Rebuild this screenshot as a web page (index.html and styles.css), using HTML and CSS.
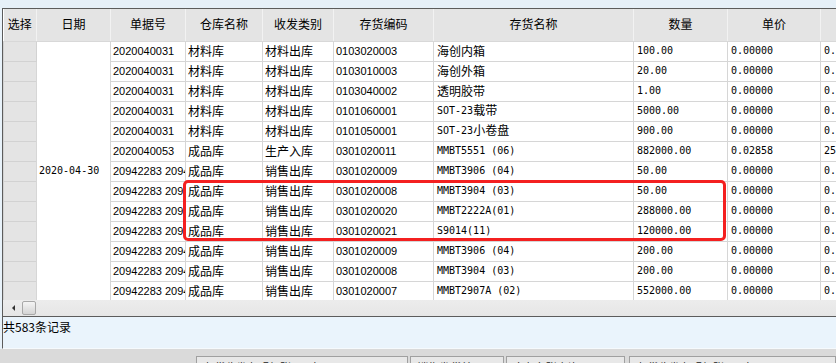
FILE: index.html
```html
<!DOCTYPE html>
<html lang="zh-CN">
  <head>
    <meta charset="UTF-8" />
    <title>出入库流水</title>
    <link rel="stylesheet" href="styles.css">
  </head>
  <body>
    <div class="topbar"></div>

    <!-- Data grid -->
    <div class="frame">
      <div class="grid">
        <table>
          <colgroup>
            <col class="c-sel"><col class="c-date"><col class="c-no"><col class="c-wh">
            <col class="c-type"><col class="c-code"><col class="c-name"><col class="c-qty">
            <col class="c-price"><col class="c-amt">
          </colgroup>
          <thead>
            <tr>
              <th>选择</th><th>日期</th><th>单据号</th><th>仓库名称</th><th>收发类别</th>
              <th>存货编码</th><th>存货名称</th><th>数量</th><th>单价</th><th>金额</th>
            </tr>
          </thead>
          <tbody>
            <tr>
              <td class="sel"></td>
              <td class="date mono" rowspan="13">2020-04-30</td>
              <td class="num">2020040031</td><td>材料库</td><td>材料出库</td><td class="num">0103020003</td>
              <td class="name">海创内箱</td><td class="mono">100.00</td><td class="mono">0.00000</td><td class="mono">0.00</td>
            </tr>
            <tr>
              <td class="sel"></td>
              <td class="num">2020040031</td><td>材料库</td><td>材料出库</td><td class="num">0103010003</td>
              <td class="name">海创外箱</td><td class="mono">20.00</td><td class="mono">0.00000</td><td class="mono">0.00</td>
            </tr>
            <tr>
              <td class="sel"></td>
              <td class="num">2020040031</td><td>材料库</td><td>材料出库</td><td class="num">0103040002</td>
              <td class="name">透明胶带</td><td class="mono">1.00</td><td class="mono">0.00000</td><td class="mono">0.00</td>
            </tr>
            <tr>
              <td class="sel"></td>
              <td class="num">2020040031</td><td>材料库</td><td>材料出库</td><td class="num">0101060001</td>
              <td class="name mono">SOT-23<span class="cn">载带</span></td><td class="mono">5000.00</td><td class="mono">0.00000</td><td class="mono">0.00</td>
            </tr>
            <tr>
              <td class="sel"></td>
              <td class="num">2020040031</td><td>材料库</td><td>材料出库</td><td class="num">0101050001</td>
              <td class="name mono">SOT-23<span class="cn">小卷盘</span></td><td class="mono">900.00</td><td class="mono">0.00000</td><td class="mono">0.00</td>
            </tr>
            <tr>
              <td class="sel"></td>
              <td class="num">2020040053</td><td>成品库</td><td>生产入库</td><td class="num">0301020011</td>
              <td class="name mono">MMBT5551 (06)</td><td class="mono">882000.00</td><td class="mono">0.02858</td><td class="mono">25207.56</td>
            </tr>
            <tr>
              <td class="sel"></td>
              <td class="num">20942283 20942284</td><td>成品库</td><td>销售出库</td><td class="num">0301020009</td>
              <td class="name mono">MMBT3906 (04)</td><td class="mono">50.00</td><td class="mono">0.00000</td><td class="mono">0.00</td>
            </tr>
            <tr>
              <td class="sel"></td>
              <td class="num">20942283 20942284</td><td>成品库</td><td>销售出库</td><td class="num">0301020008</td>
              <td class="name mono">MMBT3904 (03)</td><td class="mono">50.00</td><td class="mono">0.00000</td><td class="mono">0.00</td>
            </tr>
            <tr>
              <td class="sel"></td>
              <td class="num">20942283 20942284</td><td>成品库</td><td>销售出库</td><td class="num">0301020020</td>
              <td class="name mono">MMBT2222A(01)</td><td class="mono">288000.00</td><td class="mono">0.00000</td><td class="mono">0.00</td>
            </tr>
            <tr>
              <td class="sel"></td>
              <td class="num">20942283 20942284</td><td>成品库</td><td>销售出库</td><td class="num">0301020021</td>
              <td class="name mono">S9014(11)</td><td class="mono">120000.00</td><td class="mono">0.00000</td><td class="mono">0.00</td>
            </tr>
            <tr>
              <td class="sel"></td>
              <td class="num">20942283 20942284</td><td>成品库</td><td>销售出库</td><td class="num">0301020009</td>
              <td class="name mono">MMBT3906 (04)</td><td class="mono">200.00</td><td class="mono">0.00000</td><td class="mono">0.00</td>
            </tr>
            <tr>
              <td class="sel"></td>
              <td class="num">20942283 20942284</td><td>成品库</td><td>销售出库</td><td class="num">0301020008</td>
              <td class="name mono">MMBT3904 (03)</td><td class="mono">200.00</td><td class="mono">0.00000</td><td class="mono">0.00</td>
            </tr>
            <tr>
              <td class="sel"></td>
              <td class="num">20942283 20942284</td><td>成品库</td><td>销售出库</td><td class="num">0301020007</td>
              <td class="name mono">MMBT2907A (02)</td><td class="mono">552000.00</td><td class="mono">0.00000</td><td class="mono">0.00</td>
            </tr>
          </tbody>
        </table>
      </div>

      <!-- Horizontal scroll bar -->
      <div class="hscroll">
        <span class="arrow"></span>
        <span class="thumb"></span>
      </div>

      <!-- Highlight drawn over the grid -->
      <div class="mark"></div>
    </div>

    <div class="status">共583条记录</div>

    <div class="taskbar">
      <div class="task t1">存货收发存明细账 - 用友ERP</div>
      <div class="task t2">销售发货单</div>
      <div class="task t3">库存台账查询</div>
      <div class="task t4">存货收发存明细账 - 用友ERP</div>
    </div>
  </body>
</html>
```

FILE: styles.css
```css
* {
  margin: 0;
  padding: 0;
  box-sizing: border-box;
}

body {
  width: 836px;
  height: 363px;
  overflow: hidden;
  background: #e8f2fa;
  font-family: "Noto Sans CJK SC", sans-serif;
  color: #000;
}

.topbar {
  height: 8px;
  background: #e6f0f8;
}

.frame {
  position: relative;
  margin-left: 2px;
  border-left: 1px solid #5c5c5c;
  border-top: 1px solid #5c5c5c;
  background: #fff;
  overflow: hidden;
}

.grid {
  height: 291px;
  overflow: hidden;
}

table {
  border-collapse: collapse;
  table-layout: fixed;
  width: 895px;
}

.c-sel { width: 33px; }
.c-date { width: 74px; }
.c-no { width: 75px; }
.c-wh { width: 77px; }
.c-type { width: 71px; }
.c-code { width: 100px; }
.c-name { width: 200px; }
.c-qty { width: 94px; }
.c-price { width: 93px; }
.c-amt { width: 78px; }

th {
  height: 32px;
  background: #e4e4e4;
  border-right: 1px solid #f2f2f2;
  border-bottom: 1px solid #d8d8d8;
  font-size: 12px;
  font-weight: normal;
  text-align: center;
  padding-bottom: 2px;
}

td {
  height: 20px;
  border: 1px solid #d6d6d6;
  padding: 0 2px;
  white-space: nowrap;
  overflow: hidden;
  font-size: 12px;
  line-height: 18px;
}

td.sel {
  background: #e4e4e4;
  border-color: #d2d2d2;
}

td.date {
  vertical-align: middle;
  border-top: none;
  padding-left: 2px;
}

.num {
  font-family: "Liberation Sans", sans-serif;
  font-size: 11px;
}

.mono {
  font-family: "DejaVu Sans Mono", "Noto Sans CJK SC", monospace;
  font-size: 10px;
  padding-left: 3px;
}

.mono .cn {
  font-family: "Noto Sans CJK SC", sans-serif;
  font-size: 12px;
  line-height: 10px;
  vertical-align: top;
  display: inline-block;
  padding-top: 3px;
}

.name {
  padding-left: 3px;
}

.hscroll {
  height: 16px;
  background: linear-gradient(#ececec, #e6e6e6);
  position: relative;
  display: flex;
  align-items: center;
}

.hscroll .arrow {
  width: 0;
  height: 0;
  margin-left: 9px;
  border-top: 3px solid transparent;
  border-bottom: 3px solid transparent;
  border-right: 3px solid #333;
}

.hscroll .thumb {
  width: 14px;
  height: 14px;
  margin-left: 7px;
  border: 1px solid #a8a8a8;
  border-radius: 2px;
  background: linear-gradient(#f4f4f4, #d4d4d4);
}

/* red highlight box over rows 8-10 */
.mark {
  position: absolute;
  left: 180px;
  top: 171px;
  width: 543px;
  height: 61px;
  border: 3px solid #f42020;
  border-radius: 5px;
}

.status {
  height: 33px;
  margin-left: 2px;
  border-left: 1px solid #5c5c5c;
  border-top: 1px solid #5c5c5c;
  border-bottom: 1px solid #f6fafd;
  background: #eaf4fc;
  font-size: 12px;
  line-height: 16px;
  padding-top: 2px;
}

.taskbar {
  height: 14px;
  background: #dadada;
  display: flex;
  padding-top: 7px;
  padding-left: 196px;
  gap: 2px;
}

.task {
  height: 12px;
  border: 1px solid #a0a0a0;
  border-bottom: none;
  background: #e8e8e8;
  font-size: 11px;
  line-height: 14px;
  padding: 3px 0 0 6px;
  overflow: hidden;
  white-space: nowrap;
  color: #222;
}

.t1 { width: 215px; }
.t2 { width: 95px; }
.t3 { width: 121px; }
.t4 { width: 210px; margin-left: 2px; }
```
